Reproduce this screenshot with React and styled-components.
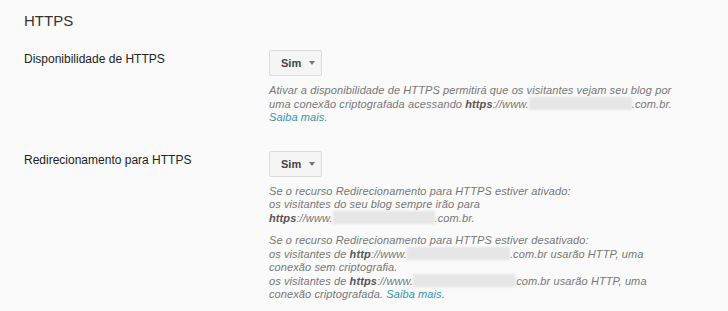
import React from 'react'
import styled, { createGlobalStyle } from 'styled-components'

const GlobalStyle = createGlobalStyle`
  html, body {
    margin: 0;
    padding: 0;
    background: #fafafa;
  }
  body {
    font-family: Arial, "Liberation Sans", sans-serif;
  }
`

const Page = styled.div`
  width: 728px;
  height: 311px;
  padding: 11px 24px 0 24px;
  box-sizing: border-box;
  background: #fafafa;
  overflow: hidden;
`

const Title = styled.h2`
  margin: 0 0 19px 0;
  font-size: 15px;
  font-weight: normal;
  color: #333;
  line-height: 20px;
`

const Row = styled.div`
  display: grid;
  grid-template-columns: 245px 1fr;
  margin-bottom: ${p => p.gap || 0}px;
`

const Label = styled.div`
  font-size: 12px;
  color: #222;
  line-height: 16px;
  padding-top: 1px;
`

const Control = styled.div`
  display: flex;
  flex-direction: column;
  align-items: flex-start;
`

const Select = styled.div`
  display: flex;
  align-items: center;
  gap: 8px;
  height: 26px;
  width: 53px;
  padding: 0 0 0 11px;
  box-sizing: border-box;
  background: #f5f5f5;
  border: 1px solid #dcdcdc;
  border-radius: 2px;
  font-size: 11px;
  font-weight: bold;
  color: #444;
  margin-bottom: 8px;
  cursor: default;
`

const Caret = styled.span`
  width: 0;
  height: 0;
  border-left: 3px solid transparent;
  border-right: 3px solid transparent;
  border-top: 4px solid #777;
`

const Help = styled.p`
  margin: 0 0 ${p => p.gap || 0}px 0;
  font-size: 11px;
  font-style: italic;
  letter-spacing: 0.1px;
  color: #777;
  line-height: 13px;
  b {
    color: #555;
  }
`

const Hidden = styled.span`
  display: inline-block;
  width: ${p => p.w || 103}px;
  height: 13px;
  vertical-align: -2px;
  background: #e6e6e6;
  filter: blur(0.8px);
`

const Link = styled.a`
  color: #3594ad;
  text-decoration: none;
`

const Dropdown = () => (
  <Select>
    Sim <Caret />
  </Select>
)

export default function App() {
  return (
    <Page>
      <GlobalStyle />
      <Title>HTTPS</Title>
      <Row gap={27}>
        <Label>Disponibilidade de HTTPS</Label>
        <Control>
          <Dropdown />
          <Help>
            Ativar a disponibilidade de HTTPS permitirá que os visitantes vejam seu blog por
            <br />
            uma conexão criptografada acessando <b>https</b>://www.<Hidden w={103} />.com.br.
            <br />
            <Link href="#">Saiba mais</Link>.
          </Help>
        </Control>
      </Row>
      <Row>
        <Label>Redirecionamento para HTTPS</Label>
        <Control>
          <Dropdown />
          <Help gap={9}>
            Se o recurso Redirecionamento para HTTPS estiver ativado:
            <br />
            os visitantes do seu blog sempre irão para
            <br />
            <b>https</b>://www.<Hidden w={102} />.com.br.
          </Help>
          <Help>
            Se o recurso Redirecionamento para HTTPS estiver desativado:
            <br />
            os visitantes de <b>http</b>://www.<Hidden w={103} />.com.br usarão HTTP, uma
            <br />
            conexão sem criptografia.
            <br />
            os visitantes de <b>https</b>://www.<Hidden w={103} />com.br usarão HTTP, uma
            <br />
            conexão criptografada. <Link href="#">Saiba mais</Link>.
          </Help>
        </Control>
      </Row>
    </Page>
  )
}
